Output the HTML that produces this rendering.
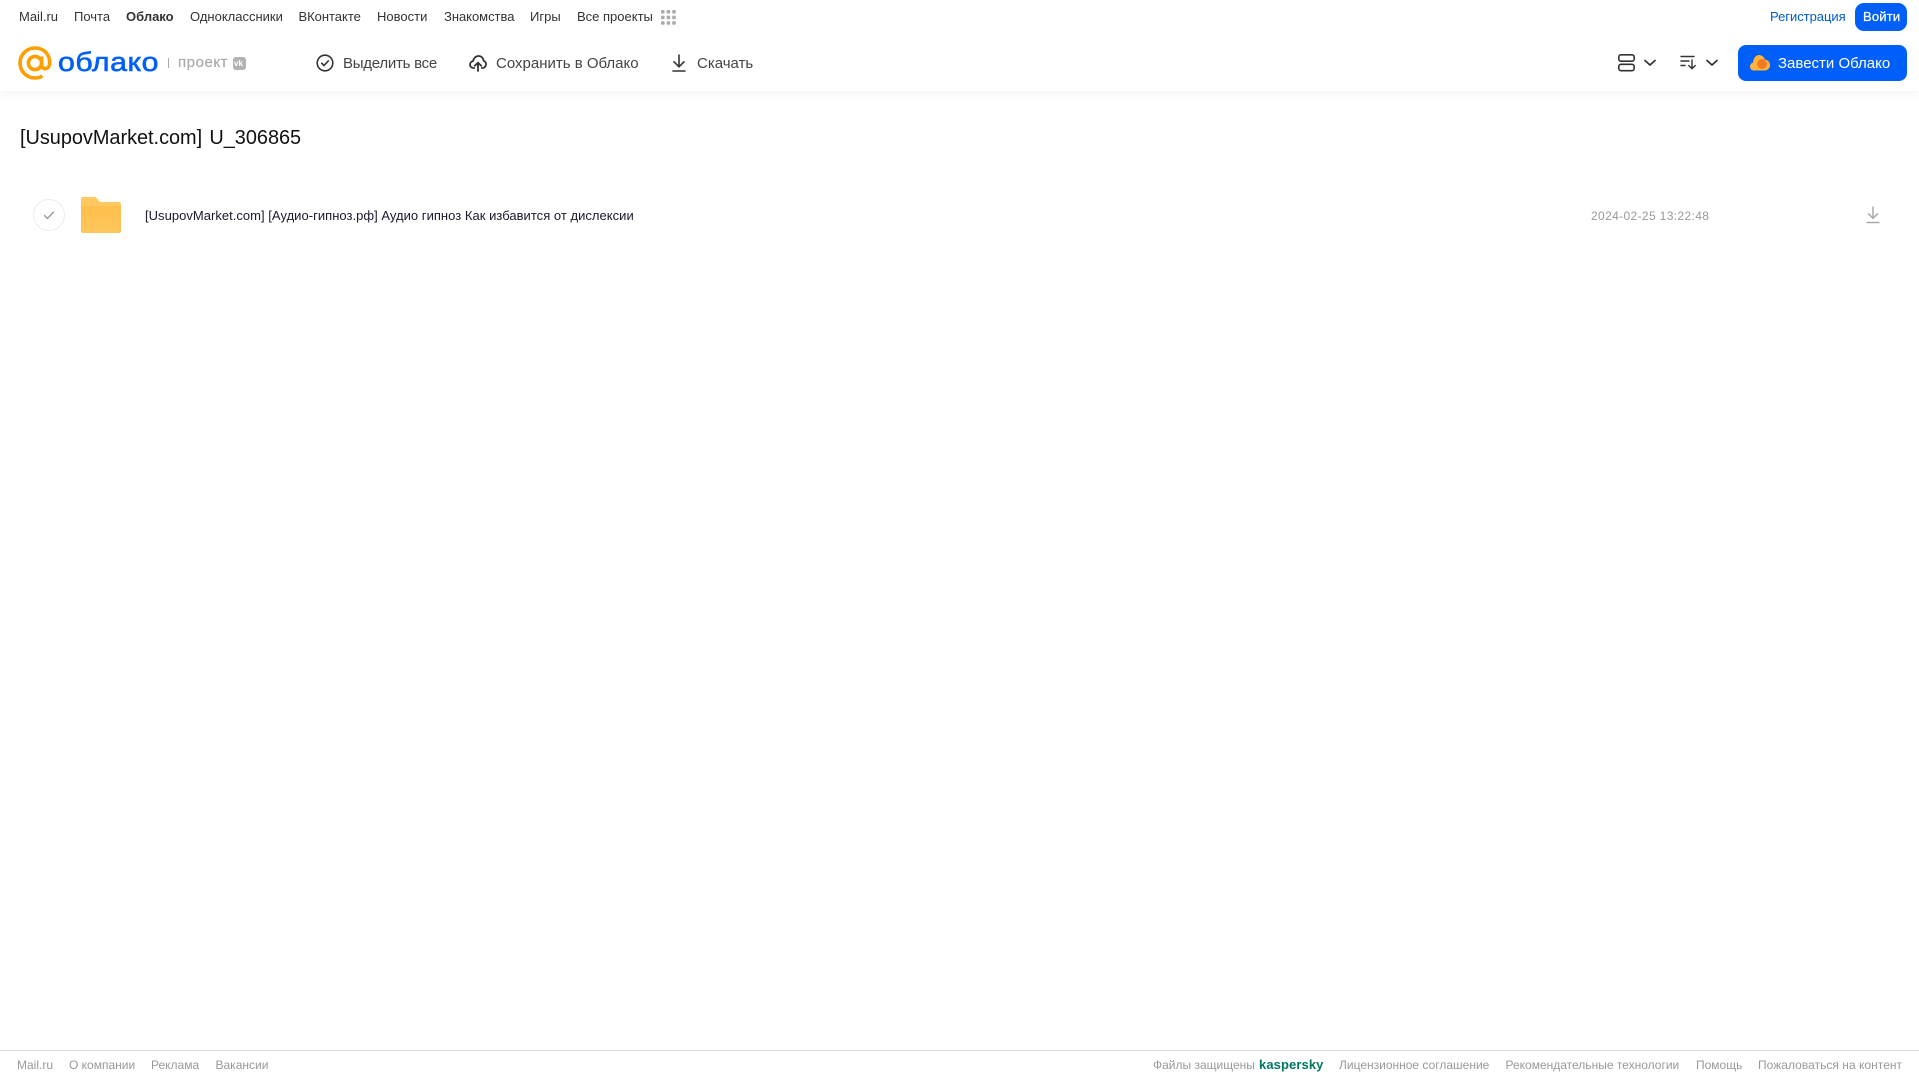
<!DOCTYPE html>
<html lang="ru">
<head>
<meta charset="utf-8">
<title>Облако</title>
<style>
html,body{margin:0;padding:0;background:#fff}
body{width:1919px;height:1079px;position:relative;overflow:hidden;font-family:"Liberation Sans","DejaVu Sans",sans-serif}
.t{position:absolute;white-space:nowrap;line-height:20px}
.n{top:7px;font-size:13px;color:#333}
.b{top:54px;font-size:15px;color:#444}
.f{top:1055px;font-size:12px;color:#999}
svg{position:absolute;display:block}
#hd{position:absolute;left:0;top:0;width:1919px;height:91px;background:#fff;box-shadow:0 1px 10px rgba(0,0,0,.07)}
#ft{position:absolute;left:0;top:1050px;width:1919px;height:1px;background:#d6d6d6}
.btn{position:absolute;background:#005ff9}
</style>
</head>
<body>
<div id="hd"></div>

<span class="t n" style="left:19px">Mail.ru</span>
<span class="t n" style="left:74px">Почта</span>
<span class="t n" style="left:126px;font-weight:bold">Облако</span>
<span class="t n" style="left:190px">Одноклассники</span>
<span class="t n" style="left:298.500px;letter-spacing:-.03px">ВКонтакте</span>
<span class="t n" style="left:377px">Новости</span>
<span class="t n" style="left:444px;letter-spacing:-.03px">Знакомства</span>
<span class="t n" style="left:530px">Игры</span>
<span class="t n" style="left:577px">Все проекты</span>
<svg style="left:661px;top:10px" width="15" height="15" viewBox="0 0 15 15" fill="#aaa"><rect x="0" y="0" width="3.6" height="3.6" rx="1"/><rect x="5.6" y="0" width="3.6" height="3.6" rx="1"/><rect x="11.2" y="0" width="3.6" height="3.6" rx="1"/><rect x="0" y="5.6" width="3.6" height="3.6" rx="1"/><rect x="5.6" y="5.6" width="3.6" height="3.6" rx="1"/><rect x="11.2" y="5.6" width="3.6" height="3.6" rx="1"/><rect x="0" y="11.2" width="3.6" height="3.6" rx="1"/><rect x="5.6" y="11.2" width="3.6" height="3.6" rx="1"/><rect x="11.2" y="11.2" width="3.6" height="3.6" rx="1"/></svg>

<span class="t n" style="left:1770px;color:#005bd1;letter-spacing:-.03px">Регистрация</span>
<div class="btn" style="left:1855px;top:3px;width:52px;height:28px;border-radius:9px"></div>
<span class="t n" style="left:1863px;color:#fff;font-size:13px;-webkit-text-stroke:.25px #fff;letter-spacing:.2px">Войти</span>

<!-- logo -->
<svg style="left:18px;top:46px" width="34" height="34" viewBox="0 0 34 34" fill="none" stroke="#ff9e00" stroke-width="3.6"><circle cx="17" cy="17" r="6.6"/><path d="M23.6 10.5V19c0 5.2 7.6 5.2 8-1.5C32.2 8.2 25.600 2 17 2 8.700 2 2 8.700 2 17s6.700 15 15 15c3 0 5.400-.7 7.500-2"/></svg>
<span class="t" style="left:58px;top:44px;line-height:36px;font-size:27px;color:#005ff9;letter-spacing:.5px;-webkit-text-stroke:.6px #005ff9;transform:scaleX(1.12);transform-origin:left center">облако</span>
<div style="position:absolute;left:168px;top:58px;width:1px;height:10px;background:#aaa"></div>
<span class="t" style="left:178px;top:53px;font-size:15px;color:#aaa;letter-spacing:.55px;-webkit-text-stroke:.2px #aaa">проект</span>
<div style="position:absolute;left:233px;top:57px;width:13px;height:13px;border-radius:3px;background:#b3b3b3"></div>
<span class="t" style="left:234px;top:57px;line-height:13px;font-size:8px;font-weight:bold;color:#fff">vk</span>

<!-- toolbar -->
<svg style="left:316px;top:54px" width="18" height="18" viewBox="0 0 18 18" fill="none" stroke="#333" stroke-width="1.600"><circle cx="9" cy="9" r="7.800"/><path d="M5.700 9.200l2.300 2.300 4.300-4.600" stroke-linecap="round" stroke-linejoin="round"/></svg>
<span class="t b" style="left:343px;letter-spacing:-.25px">Выделить все</span>

<svg style="left:469px;top:54px" width="18" height="18" viewBox="0 0 18 18" fill="none" stroke="#333" stroke-width="1.800" stroke-linecap="round" stroke-linejoin="round"><path d="M5.200 14H4.500C2.500 14 1 12.500 1 10.600c0-1.800 1.300-3.200 3-3.400C4.500 4.500 6.600 2 9.500 2c2.800 0 4.800 2.100 5.100 4.700 1.400.4 2.400 1.900 2.400 3.600 0 2-1.500 3.700-3.500 3.700h-.8"/><path d="M9 17V9M5.800 11.800L9 8.600l3.200 3.200"/></svg>
<span class="t b" style="left:496px">Сохранить в Облако</span>

<svg style="left:672px;top:54px" width="14" height="18" viewBox="0 0 14 18" fill="none" stroke="#333" stroke-width="1.600" stroke-linecap="round" stroke-linejoin="round"><path d="M7 1v11.500M2 7.800l5 5 5-5"/><path d="M1 17h12"/></svg>
<span class="t b" style="left:697px">Скачать</span>

<svg style="left:1618px;top:54px" width="17" height="18" viewBox="0 0 17 18" fill="none" stroke="#333" stroke-width="1.600"><rect x=".8" y=".8" width="15.400" height="6.400" rx="2.200"/><rect x=".8" y="10.300" width="15.400" height="6.400" rx="2.200"/></svg>
<svg style="left:1644px;top:59px" width="12" height="8" viewBox="0 0 12 8" fill="none" stroke="#333" stroke-width="1.700" stroke-linecap="round" stroke-linejoin="round"><path d="M1 1.500l5 4.500 5-4.500"/></svg>
<svg style="left:1680px;top:55px" width="17" height="15" viewBox="0 0 17 15" fill="none" stroke="#333" stroke-width="1.400" stroke-linecap="round" stroke-linejoin="round"><path d="M1 1.500h13M1 6h8M1 10.500h4"/><path d="M12 5v8.500M8.800 10.500l3.200 3.200 3.200-3.200"/></svg>
<svg style="left:1706px;top:59px" width="12" height="8" viewBox="0 0 12 8" fill="none" stroke="#333" stroke-width="1.700" stroke-linecap="round" stroke-linejoin="round"><path d="M1 1.500l5 4.500 5-4.500"/></svg>

<div class="btn" style="left:1738px;top:45px;width:169px;height:36px;border-radius:8px"></div>
<svg style="left:1750px;top:54px" width="20" height="17" viewBox="0 0 20 17"><path d="M4 16.500C1.800 16.500 0 14.700 0 12.500c0-1.900 1.200-3.400 3-3.900C3.300 4.300 6 1 9 1c2.800 0 5 1.900 5.700 4.500 3 .2 5.300 2.700 5.300 5.600 0 3-2.400 5.400-5.400 5.400z" fill="#ffb53c"/><circle cx="12" cy="10" r="5" fill="#f47b20"/></svg>
<span class="t b" style="left:1778px;color:#fff">Завести Облако</span>

<!-- title -->
<span class="t" style="left:20px;top:124px;line-height:28px;font-size:20px;color:#111;letter-spacing:-.02px;word-spacing:1.800px;transform:scaleX(.995);transform-origin:left center">[UsupovMarket.com] U_306865</span>

<!-- row -->
<svg style="left:33px;top:199px" width="32" height="32" viewBox="0 0 32 32" fill="none"><circle cx="16" cy="16" r="15.500" stroke="#ececec"/><path d="M11.500 16.500l3 3 6-6.500" stroke="#999" stroke-width="1.300" stroke-linecap="round" stroke-linejoin="round"/></svg>
<svg style="left:81px;top:197px" width="40" height="36" viewBox="0 0 40 36"><defs><linearGradient id="g" x1="0" y1="0" x2="0" y2="1"><stop offset="0" stop-color="#ffbf4c"/><stop offset="1" stop-color="#ffc65c"/></linearGradient></defs><path d="M2 0h11c1.500 0 2.500.5 3.500 2l1 1.500c.7 1 1.500 1.500 3 1.500H38c1.100 0 2 .9 2 2v27c0 1.100-.9 2-2 2H2c-1.100 0-2-.9-2-2V2C0 .9.900 0 2 0z" fill="#ffc95f"/><path d="M0 9h40V34c0 1.100-.9 2-2 2H2c-1.100 0-2-.9-2-2z" fill="url(#g)"/></svg>
<span class="t" style="left:145px;top:206px;font-size:13px;color:#1a1a2a;letter-spacing:.025px">[UsupovMarket.com] [Аудио-гипноз.рф] Аудио гипноз Как избавится от дислексии</span>
<span class="t" style="left:1591px;top:206px;font-size:12px;color:#999;letter-spacing:.36px">2024-02-25 13:22:48</span>
<svg style="left:1866px;top:206px" width="14" height="18" viewBox="0 0 14 18" fill="none" stroke="#aaa" stroke-width="1.500" stroke-linecap="round" stroke-linejoin="round"><path d="M7 1v11M2.500 7.800L7 12.300l4.500-4.500"/><path d="M1 16.500h12"/></svg>

<!-- footer -->
<div id="ft"></div>
<span class="t f" style="left:17px">Mail.ru</span>
<span class="t f" style="left:69px">О компании</span>
<span class="t f" style="left:151px">Реклама</span>
<span class="t f" style="left:215.500px">Вакансии</span>
<span class="t f" style="left:1153px">Файлы защищены</span>
<span class="t f" style="left:1259px;font-size:13px;font-weight:bold;color:#00775f;letter-spacing:.1px">kaspersky</span>
<span class="t f" style="left:1339px">Лицензионное соглашение</span>
<span class="t f" style="left:1505.500px">Рекомендательные технологии</span>
<span class="t f" style="left:1696px">Помощь</span>
<span class="t f" style="left:1758px;letter-spacing:.03px">Пожаловаться на контент</span>
</body>
</html>
